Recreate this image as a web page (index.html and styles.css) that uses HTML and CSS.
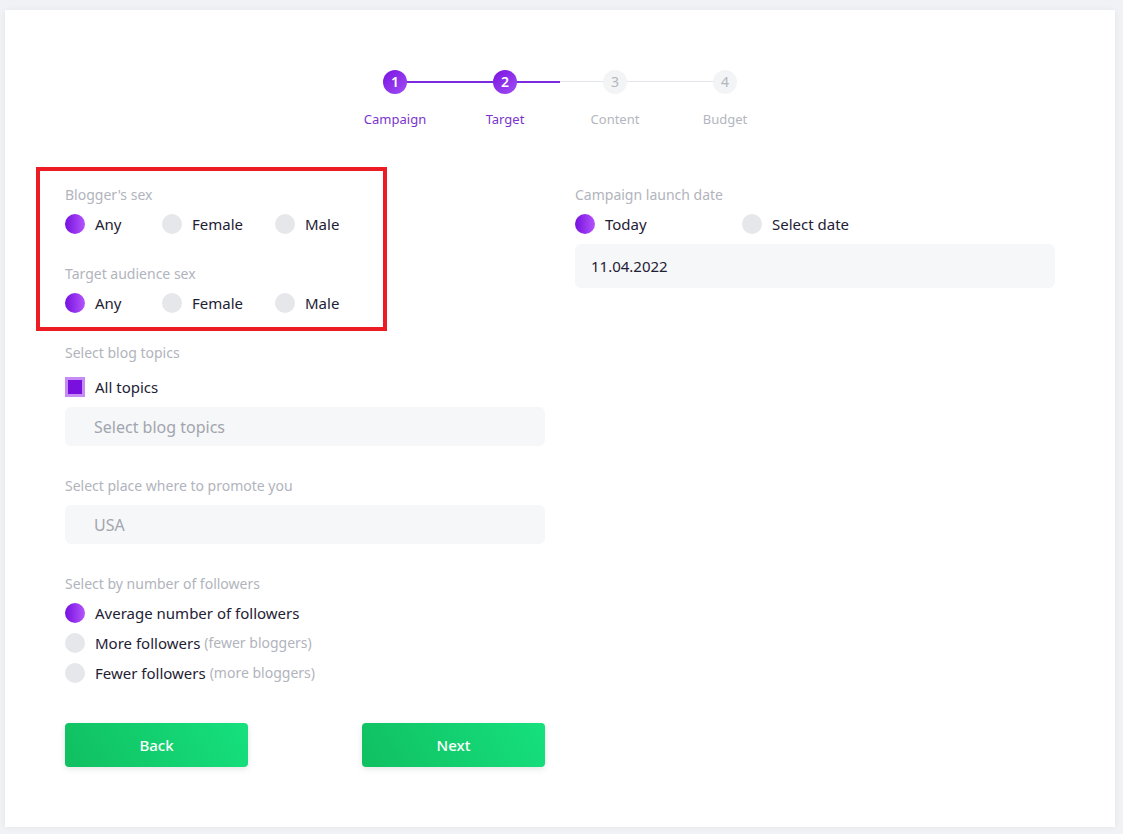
FILE: index.html
```html
<!DOCTYPE html>
<html lang="en">
<head>
<meta charset="utf-8">
<title>Campaign – Target</title>
<link rel="stylesheet" href="styles.css">
</head>
<body>
<main class="card">
  <div class="stepper">
    <div class="track"></div>
    <div class="track-done"></div>
    <div class="step done"><span class="dot">1</span><span class="step-label">Campaign</span></div>
    <div class="step done"><span class="dot">2</span><span class="step-label">Target</span></div>
    <div class="step"><span class="dot">3</span><span class="step-label">Content</span></div>
    <div class="step"><span class="dot">4</span><span class="step-label">Budget</span></div>
  </div>

  <div class="form">
    <section class="col">
      <div class="sex-group">
        <div class="highlight"></div>
        <div class="field">
          <div class="label">Blogger's sex</div>
          <div class="options sex">
            <label class="opt"><span class="radio on"></span>Any</label>
            <label class="opt"><span class="radio"></span>Female</label>
            <label class="opt"><span class="radio"></span>Male</label>
          </div>
        </div>
        <div class="field">
          <div class="label">Target audience sex</div>
          <div class="options sex">
            <label class="opt"><span class="radio on"></span>Any</label>
            <label class="opt"><span class="radio"></span>Female</label>
            <label class="opt"><span class="radio"></span>Male</label>
          </div>
        </div>
      </div>

      <div class="field">
        <div class="label">Select blog topics</div>
        <label class="opt check-row"><span class="checkbox"><span class="check-fill"></span></span>All topics</label>
        <div class="input short placeholder">Select blog topics</div>
      </div>

      <div class="field spaced">
        <div class="label">Select place where to promote you</div>
        <div class="input short placeholder">USA</div>
      </div>

      <div class="field followers">
        <div class="label">Select by number of followers</div>
        <div class="stack">
          <label class="opt"><span class="radio on"></span>Average number of followers</label>
          <label class="opt"><span class="radio"></span>More followers <span class="muted">(fewer bloggers)</span></label>
          <label class="opt"><span class="radio"></span>Fewer followers <span class="muted">(more bloggers)</span></label>
        </div>
      </div>

      <div class="buttons">
        <button class="btn">Back</button>
        <button class="btn">Next</button>
      </div>
    </section>

    <section class="col">
      <div class="field">
        <div class="label">Campaign launch date</div>
        <div class="options date">
          <label class="opt"><span class="radio on"></span>Today</label>
          <label class="opt"><span class="radio"></span>Select date</label>
        </div>
        <div class="input tall">11.04.2022</div>
      </div>
    </section>
  </div>
</main>
</body>
</html>
```

FILE: styles.css
```css
* { box-sizing: border-box; }

html, body {
  margin: 0;
  height: 834px;
  background: #f1f2f5;
  font-family: "Noto Sans", "Open Sans", sans-serif;
  color: #1e2134;
}

body {
  padding: 10px 8px 7px 5px;
}

.card {
  width: 1110px;
  height: 817px;
  background: #ffffff;
  box-shadow: 0 0 6px rgba(30, 34, 60, 0.06);
  padding: 60px;
}

/* Stepper */
.stepper {
  position: relative;
  width: 440px;
  margin: 0 auto;
  display: flex;
}

.track {
  position: absolute;
  left: 55px;
  right: 55px;
  top: 11px;
  height: 1px;
  background: #e4e5ea;
}

.track-done {
  position: absolute;
  left: 55px;
  width: 165px;
  top: 11px;
  height: 2px;
  background: #7b2ae0;
}

.step {
  position: relative;
  width: 110px;
  display: flex;
  flex-direction: column;
  align-items: center;
}

.dot {
  width: 24px;
  height: 24px;
  border-radius: 50%;
  background: #f3f4f6;
  color: #b3b6be;
  font-size: 14px;
  line-height: 24px;
  text-align: center;
}

.step.done .dot {
  background: linear-gradient(135deg, #7a12e0, #a04ff5);
  color: #ffffff;
  font-weight: 600;
}

.step-label {
  margin-top: 16px;
  font-size: 13px;
  line-height: 18px;
  color: #b3b6be;
}

.step.done .step-label {
  color: #7a35cc;
}

/* Form */
.form {
  margin-top: 58px;
  display: flex;
  gap: 30px;
}

.col {
  width: 480px;
  display: flex;
  flex-direction: column;
  gap: 30px;
}

.sex-group {
  position: relative;
  display: flex;
  flex-direction: column;
  gap: 30px;
}

.highlight {
  position: absolute;
  left: -29px;
  top: -19px;
  width: 351px;
  height: 164px;
  border: 4px solid #ec1c24;
  pointer-events: none;
}

.field {
  display: flex;
  flex-direction: column;
  gap: 9px;
}

.field.spaced {
  margin-top: 1px;
  gap: 10px;
}

.field.followers {
  margin-top: 1px;
}

.label {
  font-size: 14px;
  line-height: 18px;
  color: #b1b4bc;
}

.options {
  display: grid;
}

.options.sex {
  grid-template-columns: 97px 113px auto;
}

.options.date {
  grid-template-columns: 167px auto;
}

.opt {
  display: flex;
  align-items: center;
  gap: 10px;
  font-size: 15px;
  line-height: 22px;
  color: #1e2134;
  white-space: nowrap;
}

.radio {
  flex: none;
  width: 20px;
  height: 20px;
  border-radius: 50%;
  background: #e6e7eb;
}

.radio.on {
  background: linear-gradient(90deg, #7510df, #b455fb);
}

.check-row {
  margin-top: 5px;
}

.checkbox {
  flex: none;
  width: 20px;
  height: 20px;
  background: #c58cf6;
  padding: 3px;
}

.check-fill {
  display: block;
  width: 14px;
  height: 14px;
  background: #7a10de;
}

.input {
  width: 100%;
  background: #f6f7f9;
  border-radius: 6px;
  display: flex;
  align-items: center;
  font-size: 15px;
  color: #1e2134;
}

.input.short {
  height: 39px;
  padding-left: 29px;
}

.input.tall {
  height: 44px;
  padding-left: 16px;
}

.input.placeholder {
  color: #a2a5ad;
  font-size: 16px;
}

.stack {
  display: flex;
  flex-direction: column;
  gap: 8px;
}

.muted {
  color: #b1b4bc;
  font-size: 14px;
  margin-left: -6px;
}

.buttons {
  margin-top: 9px;
  display: flex;
  justify-content: space-between;
}

.btn {
  width: 183px;
  height: 44px;
  border: none;
  border-radius: 4px;
  background: linear-gradient(60deg, #10bf60, #16e07e);
  color: #ffffff;
  font-family: "Noto Sans", "Open Sans", sans-serif;
  font-size: 15px;
  font-weight: 500;
  box-shadow: 0 2px 6px rgba(20, 60, 40, 0.12);
}
```
